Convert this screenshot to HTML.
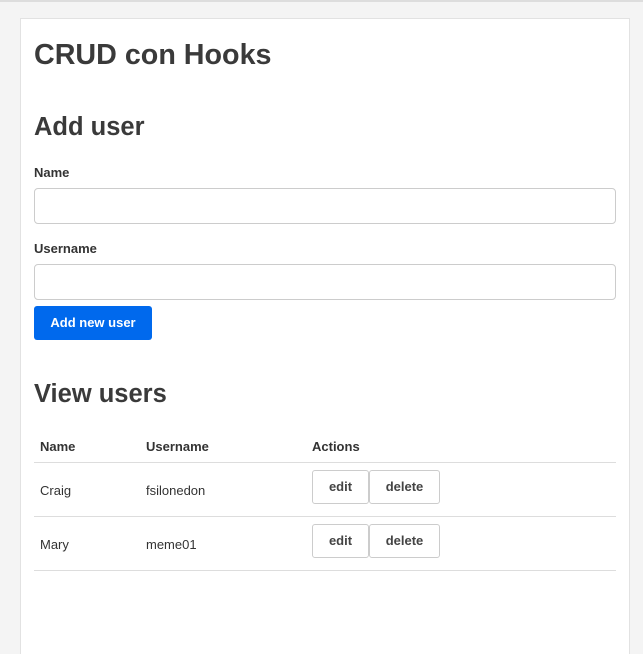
<!DOCTYPE html>
<html><head><style>
*{box-sizing:border-box;margin:0;padding:0}
html,body{width:643px;height:654px;overflow:hidden}
body{background:#f4f4f4;font-family:"Liberation Sans",Arial,sans-serif;color:#333;position:relative}
.top{position:absolute;left:0;top:0;width:643px;height:2px;background:#ddd}
.card{position:absolute;left:20px;top:18px;width:610px;height:640px;background:#fff;border:1px solid #e2e2e2}
.a{position:absolute;white-space:nowrap}
h1{font-size:28.7px;font-weight:bold;color:#3a3a3a}
h2{font-size:25.5px;font-weight:bold;color:#3a3a3a}
.lbl{font-size:13px;font-weight:bold}
.inp{position:absolute;left:13px;width:582px;height:36px;border:1px solid #ccc;border-radius:4px}
.btn{position:absolute;left:13px;top:287px;width:118px;height:34px;background:#0069ed;color:#fff;border-radius:3px;font-size:13px;font-weight:bold;text-align:center;line-height:34px}
.line{position:absolute;left:13px;width:582px;height:1px;background:#ddd}
.td{font-size:13px}
.th{font-size:13px;font-weight:bold}
.b{position:absolute;height:34px;border:1px solid #ccc;border-radius:3px;font-size:13px;font-weight:bold;text-align:center;line-height:31px;color:#444}
</style></head><body>
<div class="top"></div>
<div class="card">
<h1 class="a" style="left:13px;top:20px">CRUD con Hooks</h1>
<h2 class="a" style="left:13px;top:94px">Add user</h2>
<div class="a lbl" style="left:13px;top:146px">Name</div>
<div class="inp" style="top:169px"></div>
<div class="a lbl" style="left:13px;top:222px">Username</div>
<div class="inp" style="top:245px"></div>
<div class="btn">Add new user</div>
<h2 class="a" style="left:13px;top:361px">View users</h2>
<div class="a th" style="left:19px;top:420px">Name</div>
<div class="a th" style="left:125px;top:420px">Username</div>
<div class="a th" style="left:291px;top:420px">Actions</div>
<div class="line" style="top:443px"></div>
<div class="a td" style="left:19px;top:464px">Craig</div>
<div class="a td" style="left:125px;top:464px">fsilonedon</div>
<div class="b" style="left:291px;top:451px;width:57px">edit</div>
<div class="b" style="left:348px;top:451px;width:71px">delete</div>
<div class="line" style="top:497px"></div>
<div class="a td" style="left:19px;top:518px">Mary</div>
<div class="a td" style="left:125px;top:518px">meme01</div>
<div class="b" style="left:291px;top:505px;width:57px">edit</div>
<div class="b" style="left:348px;top:505px;width:71px">delete</div>
<div class="line" style="top:551px"></div>
</div>
</body></html>
